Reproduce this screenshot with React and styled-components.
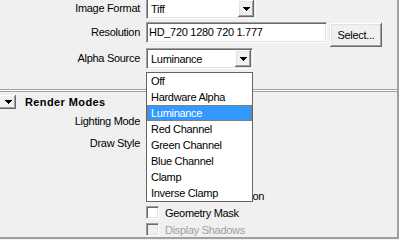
import styled, { createGlobalStyle } from "styled-components"

const GlobalStyle = createGlobalStyle`
    body {
        margin: 0;
        background: #f0f0f0;
        font-family: "Liberation Sans", Arial, sans-serif;
        font-size: 11px;
        letter-spacing: -0.3px;
        color: #000;
    }
`

const alphaOptions = [
    "Off",
    "Hardware Alpha",
    "Luminance",
    "Red Channel",
    "Green Channel",
    "Blue Channel",
    "Clamp",
    "Inverse Clamp",
]

function Arrow() {
    return (
        <svg width="7" height="4" viewBox="0 0 7 4" shapeRendering="crispEdges">
            <path d="M0 0h7v1h-1v1h-1v1h-1v1h-1v-1h-1v-1h-1v-1h-1z" fill="#000" />
        </svg>
    )
}

function ComboBox({ value, width, children }) {
    return (
        <Combo $w={width}>
            <ComboValue>{value}</ComboValue>
            <DropButton><Arrow /></DropButton>
            {children}
        </Combo>
    )
}

function CheckOption({ label, disabled }) {
    return (
        <Row $h={17}>
            <Label />
            <CheckBox $disabled={disabled} />
            <CheckText $disabled={disabled}>{label}</CheckText>
        </Row>
    )
}

export default function App() {
    return (
        <>
            <GlobalStyle />
            <Panel>
                <Fields>
                    <Row>
                        <Label>Image Format</Label>
                        <ComboBox value="Tiff" width={110} />
                    </Row>
                    <Row $top={3} $h={25}>
                        <Label>Resolution</Label>
                        <Controls>
                            <TextField>HD_720 1280 720 1.777</TextField>
                            <Button>Select...</Button>
                        </Controls>
                    </Row>
                    <Row $top={1}>
                        <Label>Alpha Source</Label>
                        <ComboBox value="Luminance" width={107}>
                            <DropList>
                                {alphaOptions.map((o) => (
                                    <ListItem key={o} $selected={o === "Luminance"}>{o}</ListItem>
                                ))}
                            </DropList>
                        </ComboBox>
                    </Row>
                </Fields>

                <Separator />
                <SectionHeader>
                    <CollapseButton><Arrow /></CollapseButton>
                    <SectionTitle>Render Modes</SectionTitle>
                </SectionHeader>

                <Fields>
                    <Row>
                        <Label>Lighting Mode</Label>
                        <ComboBox width={106} />
                    </Row>
                    <Row $top={1}>
                        <Label>Draw Style</Label>
                        <ComboBox width={106} />
                    </Row>
                    <CheckList>
                        <CheckOption label="Highlighting Selection" />
                        <CheckOption label="Geometry Mask" />
                        <CheckOption label="Display Shadows" disabled />
                    </CheckList>
                </Fields>
            </Panel>
        </>
    )
}

const Panel = styled.div`
    width: 399px;
    height: 239px;
    box-sizing: border-box;
    border-right: 2px solid #a0a0a0;
    border-bottom: 2px solid #a0a0a0;
    overflow: hidden;
`

const Fields = styled.div`
    display: flex;
    flex-direction: column;
    &:first-child {
        margin-top: -2px;
    }
`

const Row = styled.div`
    display: flex;
    align-items: ${(p) => (p.$h === 17 ? "center" : "flex-start")};
    gap: 6px;
    height: ${(p) => p.$h || 21}px;
    margin-top: ${(p) => p.$top || 0}px;
    flex: none;
`

const Label = styled.div`
    width: 140px;
    flex: none;
    text-align: right;
    line-height: 21px;
    white-space: nowrap;
`

const sunken = `
    box-sizing: border-box;
    background: #fff;
    border-top: 1px solid #a0a0a0;
    border-left: 1px solid #a0a0a0;
    border-right: 1px solid #fff;
    border-bottom: 1px solid #fff;
    box-shadow: inset 1px 1px #696969, inset -1px -1px #e3e3e3;
`

const raised = `
    background: #f0f0f0;
    box-shadow: inset -1px -1px #696969, inset 1px 1px #fff, inset -2px -2px #a0a0a0, inset 2px 2px #e3e3e3;
`

const Combo = styled.div`
    ${sunken}
    position: relative;
    width: ${(p) => p.$w}px;
    height: 21px;
    display: flex;
    align-items: center;
    padding: 1px 1px 1px 4px;
    flex: none;
`

const ComboValue = styled.span`
    flex: 1;
    white-space: nowrap;
    overflow: hidden;
`

const DropButton = styled.div`
    ${raised}
    width: 16px;
    height: 17px;
    flex: none;
    display: flex;
    align-items: center;
    justify-content: center;
`

const Controls = styled.div`
    display: flex;
    gap: 3px;
`

const TextField = styled.div`
    ${sunken}
    width: 181px;
    height: 21px;
    padding-left: 2px;
    line-height: 19px;
    white-space: nowrap;
`

const Button = styled.button`
    ${raised}
    box-sizing: border-box;
    width: 52px;
    height: 24px;
    margin-top: 1px;
    border: none;
    padding: 0;
    font: inherit;
    letter-spacing: inherit;
    color: #000;
`

const DropList = styled.div`
    position: absolute;
    left: -1px;
    top: 23px;
    width: 107px;
    box-sizing: border-box;
    background: #fff;
    border: 1px solid #646464;
    z-index: 10;
`

const ListItem = styled.div`
    box-sizing: border-box;
    height: 16px;
    line-height: ${(p) => (p.$selected ? 14 : 16)}px;
    padding-left: ${(p) => (p.$selected ? 3 : 4)}px;
    white-space: nowrap;
    background: ${(p) => (p.$selected ? "#3399ff" : "#fff")};
    color: ${(p) => (p.$selected ? "#fff" : "#000")};
    border: ${(p) => (p.$selected ? "1px dotted #cc6600" : "none")};
`

const Separator = styled.div`
    margin-top: 20px;
    height: 1px;
    background: #fff;
    border-top: 1px solid #a0a0a0;
    border-bottom: 1px solid #a0a0a0;
`

const SectionHeader = styled.div`
    display: flex;
    align-items: center;
    height: 19px;
`

const CollapseButton = styled.div`
    width: 16px;
    height: 14px;
    background: #f0f0f0;
    box-shadow: inset -1px -1px #696969, inset 0 1px #fff, inset -2px -2px #a0a0a0;
    display: flex;
    align-items: center;
    justify-content: center;
`

const SectionTitle = styled.div`
    margin-left: 9px;
    font-weight: bold;
    letter-spacing: 0.4px;
`

const CheckList = styled.div`
    display: flex;
    flex-direction: column;
    margin-top: 33px;
`

const CheckBox = styled.div`
    ${sunken}
    width: 13px;
    height: 13px;
    flex: none;
    background: ${(p) => (p.$disabled ? "#f0f0f0" : "#fff")};
`

const CheckText = styled.span`
    white-space: nowrap;
    color: ${(p) => (p.$disabled ? "#a0a0a0" : "#000")};
`
